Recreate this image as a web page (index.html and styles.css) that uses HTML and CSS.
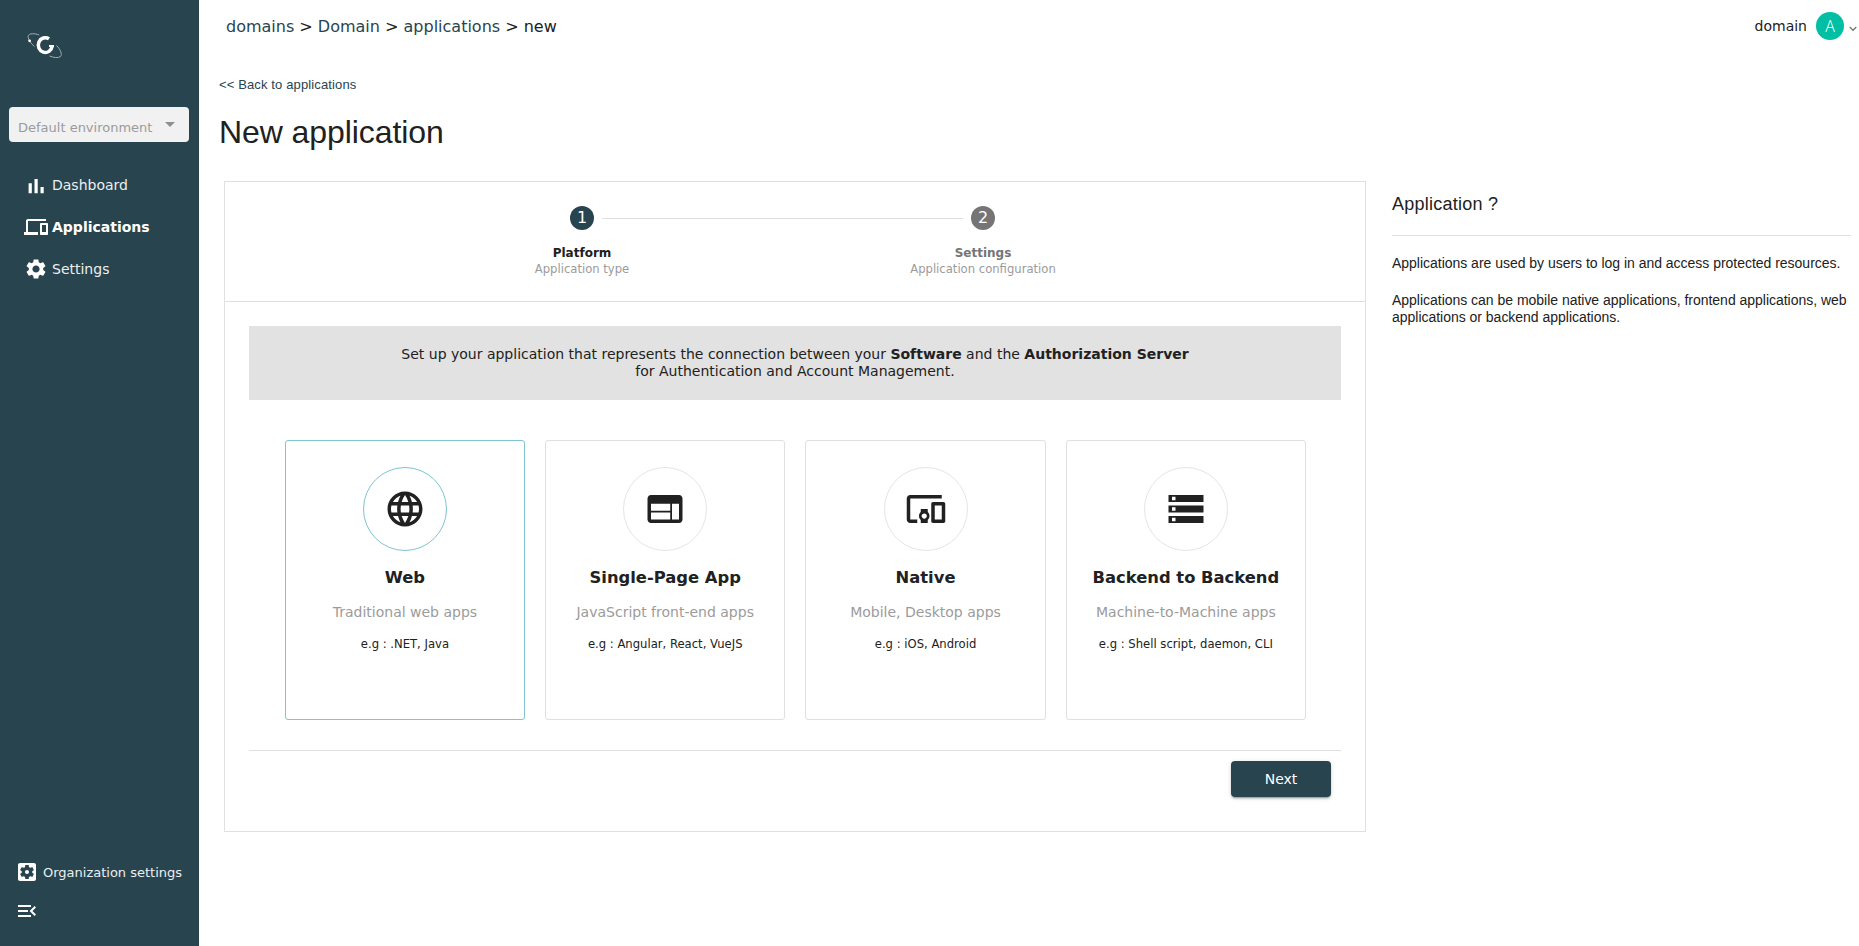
FILE: index.html
```html
<!DOCTYPE html>
<html lang="en">
<head>
<meta charset="utf-8">
<title>New application</title>
<link rel="stylesheet" href="styles.css">
</head>
<body>
<div class="app">
  <aside class="sidebar">
    <div class="logo">
      <svg width="36" height="28" viewBox="0 0 36 28" fill="none">
        <path d="M12.2 3C7.500 1.200 2.200 1.200 1.200 3.800C.5 6 3 10.500 7.300 14.500" stroke="#9fb0b5" stroke-width="1"/>
        <path d="M29.500 13.500C33.500 17.500 35.500 22.500 33.500 24.500C31.500 26.200 26.500 25.700 22.500 24" stroke="#9fb0b5" stroke-width="1"/>
        <circle cx="2.600" cy="8.800" r="1.400" fill="#fff"/>
        <path d="M22 6.800A7 7.400 0 1 0 25.200 14.300" stroke="#fff" stroke-width="3.500"/>
        <path d="M22 13h5v2h-5z" fill="#fff"/>
      </svg>
    </div>
    <div class="env"><span>Default environment</span><i class="caret"></i></div>
    <nav class="nav">
      <a class="nav-item"><svg class="icon bars" viewBox="0 0 24 24"><path d="M4.600 9.200h3.200V19.200H4.600zM10.500 5h3.200v14.200h-3.200zM16.500 13h3.200v6.200h-3.200z"/></svg><span>Dashboard</span></a>
      <a class="nav-item active"><svg class="icon" viewBox="0 0 24 24"><path d="M4 6h18V4H4c-1.100 0-2 .9-2 2v11H0v3h14v-3H4V6zm19 2h-6c-.55 0-1 .45-1 1v10c0 .55.45 1 1 1h6c.55 0 1-.45 1-1V9c0-.55-.45-1-1-1zm-1 9h-4v-7h4v7z"/></svg><span>Applications</span></a>
      <a class="nav-item"><svg class="icon" viewBox="0 0 24 24"><path d="M19.140 12.940c.04-.3.060-.61.060-.94 0-.32-.02-.64-.07-.94l2.030-1.580c.18-.14.23-.41.120-.61l-1.920-3.320c-.12-.22-.37-.29-.59-.22l-2.390.96c-.5-.38-1.030-.7-1.620-.94l-.36-2.540c-.04-.24-.24-.41-.48-.41h-3.840c-.24 0-.43.170-.47.410l-.36 2.540c-.59.240-1.130.570-1.620.940l-2.390-.96c-.22-.08-.47 0-.59.220L2.740 8.870c-.12.210-.08.470.120.610l2.030 1.580c-.05.300-.09.630-.09.940s.02.640.070.940l-2.030 1.580c-.18.140-.23.410-.12.610l1.920 3.320c.12.220.370.290.590.220l2.390-.96c.5.380 1.030.7 1.620.94l.36 2.540c.05.240.240.410.480.410h3.840c.24 0 .44-.17.470-.41l.36-2.540c.59-.24 1.130-.56 1.620-.94l2.390.96c.22.080.470 0 .59-.22l1.920-3.320c.12-.22.070-.47-.12-.61l-2.010-1.580zM12 15.600c-1.980 0-3.600-1.620-3.600-3.600s1.620-3.600 3.600-3.600 3.600 1.620 3.600 3.600-1.620 3.600-3.600 3.600z"/></svg><span>Settings</span></a>
    </nav>
    <div class="side-foot">
      <a class="org"><svg class="icon" viewBox="0 0 24 24"><path d="M12 10c-1.100 0-2 .9-2 2s.9 2 2 2 2-.9 2-2-.9-2-2-2zm7-7H5c-1.110 0-2 .9-2 2v14c0 1.100.89 2 2 2h14c1.110 0 2-.9 2-2V5c0-1.100-.89-2-2-2zm-1.750 9c0 .23-.02.46-.05.68l1.480 1.160c.13.110.170.3.080.450l-1.400 2.420c-.09.150-.27.210-.43.150l-1.740-.7c-.36.280-.76.510-1.180.69l-.26 1.850c-.03.170-.18.300-.35.300h-2.800c-.17 0-.32-.13-.35-.29l-.26-1.850c-.43-.18-.82-.41-1.180-.69l-1.740.7c-.16.060-.34 0-.43-.15l-1.400-2.420c-.09-.15-.05-.34.080-.45l1.480-1.160c-.03-.23-.05-.46-.05-.69 0-.23.020-.46.050-.68l-1.480-1.160c-.13-.11-.17-.3-.08-.45l1.400-2.420c.09-.15.270-.21.430-.15l1.740.7c.36-.28.760-.51 1.180-.69l.26-1.850c.03-.17.180-.3.350-.3h2.800c.17 0 .32.130.350.290l.26 1.850c.43.180.820.410 1.180.69l1.740-.7c.16-.06.340 0 .43.150l1.400 2.420c.09.150.050.340-.08.450l-1.480 1.160c.03.230.050.460.050.690z"/></svg><span>Organization settings</span></a>
      <a class="collapse"><svg class="icon" viewBox="0 0 24 24"><path d="M3 18h13v-2H3v2zm0-5h10v-2H3v2zm0-7v2h13V6H3zm18 9.590L17.420 12 21 8.410 19.590 7l-5 5 5 5L21 15.590z"/></svg></a>
    </div>
  </aside>
  <main class="main">
    <header class="top">
      <div class="crumbs"><a>domains</a> &gt; <a>Domain</a> &gt; <a>applications</a> &gt; <span>new</span></div>
      <div class="user"><span>domain</span><b class="avatar">A</b><svg width="8" height="6" viewBox="0 0 8 6" fill="none" stroke="#777" stroke-width="1.300"><path d="M.7 1L4 4.300 7.300 1"/></svg></div>
    </header>
    <div class="page-head">
      <a class="back">&lt;&lt; Back to applications</a>
      <h1>New application</h1>
    </div>
    <div class="content">
      <section class="panel">
        <div class="stepper">
          <div class="step current"><i>1</i><b>Platform</b><span>Application type</span></div>
          <div class="rail"></div>
          <div class="step"><i>2</i><b>Settings</b><span>Application configuration</span></div>
        </div>
        <div class="body">
          <p class="banner">Set up your application that represents the connection between your <b>Software</b> and the <b>Authorization Server</b><br>for Authentication and Account Management.</p>
          <div class="cards">
            <div class="card selected">
              <div class="round"><svg viewBox="0 0 24 24"><path d="M11.990 2C6.470 2 2 6.480 2 12s4.470 10 9.990 10C17.520 22 22 17.520 22 12S17.520 2 11.990 2zm6.930 6h-2.950c-.32-1.250-.78-2.450-1.380-3.560 1.840.63 3.370 1.910 4.330 3.560zM12 4.040c.83 1.200 1.480 2.530 1.910 3.960h-3.820c.43-1.430 1.080-2.760 1.910-3.960zM4.260 14C4.100 13.360 4 12.690 4 12s.1-1.360.26-2h3.380c-.08.66-.14 1.320-.14 2s.06 1.340.14 2H4.260zm.82 2h2.950c.32 1.250.78 2.450 1.380 3.560-1.840-.63-3.370-1.900-4.330-3.560zm2.950-8H5.080c.96-1.660 2.490-2.930 4.330-3.560C8.810 5.550 8.350 6.750 8.030 8zM12 19.960c-.83-1.200-1.480-2.530-1.910-3.960h3.820c-.43 1.430-1.080 2.760-1.910 3.960zM14.340 14H9.660c-.09-.66-.16-1.320-.16-2s.07-1.350.16-2h4.680c.09.65.16 1.320.16 2s-.07 1.340-.16 2zm.25 5.560c.6-1.110 1.060-2.310 1.380-3.560h2.950c-.96 1.650-2.490 2.930-4.330 3.560zM16.360 14c.08-.66.14-1.320.14-2s-.06-1.340-.14-2h3.380c.16.64.26 1.310.26 2s-.1 1.360-.26 2h-3.380z"/></svg></div>
              <h2>Web</h2><p class="kind">Traditional web apps</p><p class="eg">e.g : .NET, Java</p>
            </div>
            <div class="card">
              <div class="round"><svg viewBox="0 0 24 24"><path d="M20 4H4c-1.100 0-1.990.9-1.990 2L2 18c0 1.100.9 2 2 2h16c1.100 0 2-.9 2-2V6c0-1.100-.9-2-2-2zm-5 14H4v-4h11v4zm0-5H4V9h11v4zm5 5h-4V9h4v9z"/></svg></div>
              <h2>Single-Page App</h2><p class="kind">JavaScript front-end apps</p><p class="eg">e.g : Angular, React, VueJS</p>
            </div>
            <div class="card">
              <div class="round"><svg viewBox="0 0 24 24"><path d="M3 6h18V4H3c-1.100 0-2 .9-2 2v12c0 1.100.9 2 2 2h4v-2H3V6zm10 6H9v1.780c-.61.550-1 1.330-1 2.220s.39 1.670 1 2.220V20h4v-1.780c.61-.55 1-1.340 1-2.220s-.39-1.670-1-2.220V12zm-2 5.500c-.83 0-1.500-.67-1.500-1.500s.67-1.500 1.500-1.500 1.500.67 1.500 1.500-.67 1.500-1.500 1.500zM22 8h-6c-.5 0-1 .5-1 1v10c0 .5.5 1 1 1h6c.5 0 1-.5 1-1V9c0-.5-.5-1-1-1zm-1 10h-4v-8h4v8z"/></svg></div>
              <h2>Native</h2><p class="kind">Mobile, Desktop apps</p><p class="eg">e.g : iOS, Android</p>
            </div>
            <div class="card">
              <div class="round"><svg viewBox="0 0 24 24"><path d="M2 20h20v-4H2v4zm2-3h2v2H4v-2zM2 4v4h20V4H2zm4 3H4V5h2v2zm-4 7h20v-4H2v4zm2-3h2v2H4v-2z"/></svg></div>
              <h2>Backend to Backend</h2><p class="kind">Machine-to-Machine apps</p><p class="eg">e.g : Shell script, daemon, CLI</p>
            </div>
          </div>
          <div class="actions"><button class="next">Next</button></div>
        </div>
      </section>
      <aside class="help">
        <h3>Application ?</h3>
        <p>Applications are used by users to log in and access protected resources.</p>
        <p>Applications can be mobile native applications, frontend applications, web applications or backend applications.</p>
      </aside>
    </div>
  </main>
</div>
</body>
</html>
```
FILE: styles.css
```css
* { box-sizing: border-box; }
body { margin: 0; background: #fff; color: #212121; font: 14px/17px "DejaVu Sans", sans-serif; }
h1, h2, h3, p { margin: 0; }
.app { display: flex; height: 946px; overflow: hidden; }

.sidebar { display: flex; flex-direction: column; width: 199px; flex: none; background: #28444f; color: #eceff0; }
.logo { height: 107px; padding: 32px 0 0 27px; }
.logo svg { display: block; }
.env { display: flex; justify-content: space-between; width: 180px; height: 35px; margin-left: 9px; padding: 12px 14px 0 9px; border-radius: 4px; background: #f1f1f1; color: #9b9b9b; font-size: 13px; line-height: 17px; white-space: nowrap; }
.caret { width: 0; height: 0; margin-top: 3px; border: 5px solid transparent; border-top-color: #8f8f8f; border-bottom: 0; }
.nav { margin-top: 22px; }
.nav-item { display: flex; align-items: center; height: 42px; padding-left: 24px; gap: 4px; }
.icon { display: block; width: 24px; height: 24px; fill: #fff; }
.bars { transform: translateY(1px); }
.active { color: #fff; font-weight: bold; }
.side-foot { margin-top: auto; padding: 0 0 23px 15px; font-size: 13px; }
.org { display: flex; align-items: center; gap: 4px; white-space: nowrap; }
.collapse { display: block; margin-top: 15px; }

.main { flex: 1; min-width: 0; }
.top { display: flex; justify-content: space-between; align-items: center; height: 52px; padding: 0 2px 0 27px; }
.crumbs { padding-top: 2px; font-size: 16px; line-height: 20px; }
.crumbs a, .back { color: #28444f; }
.user { display: flex; align-items: center; }
.avatar { display: grid; place-items: center; width: 28px; height: 28px; margin: 0 5px 0 9px; border-radius: 50%; background: #00bfa5; color: #fff; font: 300 16px "Open Sans", sans-serif; }
.user svg { margin-top: 5px; }
.page-head { height: 129px; padding: 24px 0 0 20px; font-family: "Liberation Sans", sans-serif; }
.back { display: block; font-size: 13px; line-height: 17px; letter-spacing: .13px; }
h1 { margin-top: 19px; font-size: 32px; font-weight: 400; line-height: 40px; letter-spacing: -.08px; }
.content { display: flex; padding-left: 25px; gap: 26px; }

.panel { width: 1142px; height: 651px; border: 1px solid #e0e0e0; }
.stepper { display: flex; justify-content: center; height: 120px; padding: 24px 25px 0 0; border-bottom: 1px solid #e0e0e0; }
.step { display: flex; flex-direction: column; align-items: center; width: 24px; color: #9b9b9b; font-size: 11.620px; line-height: 16px; white-space: nowrap; }
.step i { display: grid; place-items: center; width: 24px; height: 24px; margin-bottom: 15px; border-radius: 50%; background: #757575; color: #fff; font-size: 16px; font-style: normal; }
.step b { color: #757575; font-size: 12px; }
.current i { background: #28444f; }
.current b { color: #212121; }
.rail { width: 361px; height: 1px; margin: 12px 8px 0; background: #e0e0e0; }
.body { padding: 24px; }
.banner { height: 74px; padding-top: 20px; background: #e2e2e2; text-align: center; }
.cards { display: grid; grid-template-columns: repeat(4, 1fr); gap: 20px; height: 351px; padding: 40px 35px 0 35.750px; border-bottom: 1px solid #e0e0e0; }
.card { height: 280px; padding-top: 26px; border: 1px solid #e0e0e0; border-radius: 3px; text-align: center; }
.round { display: grid; place-items: center; width: 84px; height: 84px; margin: 0 auto; border: 1px solid #e5e5e5; border-radius: 50%; }
.round svg { width: 42px; height: 42px; fill: #212121; }
.selected, .selected .round { border-color: #7fc4cf; }
h2 { margin-top: 17px; font-size: 16.380px; line-height: 20px; }
.kind { margin-top: 16px; color: #9b9b9b; }
.eg { margin-top: 15px; font-size: 11.620px; line-height: 16px; }
.actions { display: flex; justify-content: flex-end; padding: 10px 10px 0 0; }
.next { width: 100px; height: 36px; padding: 0; border: 0; border-radius: 4px; background: #28444f; color: #fff; font: 14px "DejaVu Sans", sans-serif; box-shadow: 0 3px 1px -2px #0003, 0 2px 2px #0002, 0 1px 5px #0002; }

.help { width: 459px; font: 14px/17px "Liberation Sans", sans-serif; letter-spacing: -.02px; }
.help h3 { height: 55px; padding-top: 11px; border-bottom: 1px solid #e0e0e0; font-size: 18px; font-weight: 400; line-height: 24px; letter-spacing: .25px; }
.help p { margin-top: 19px; }
.help p + p { margin-top: 20px; }
```
